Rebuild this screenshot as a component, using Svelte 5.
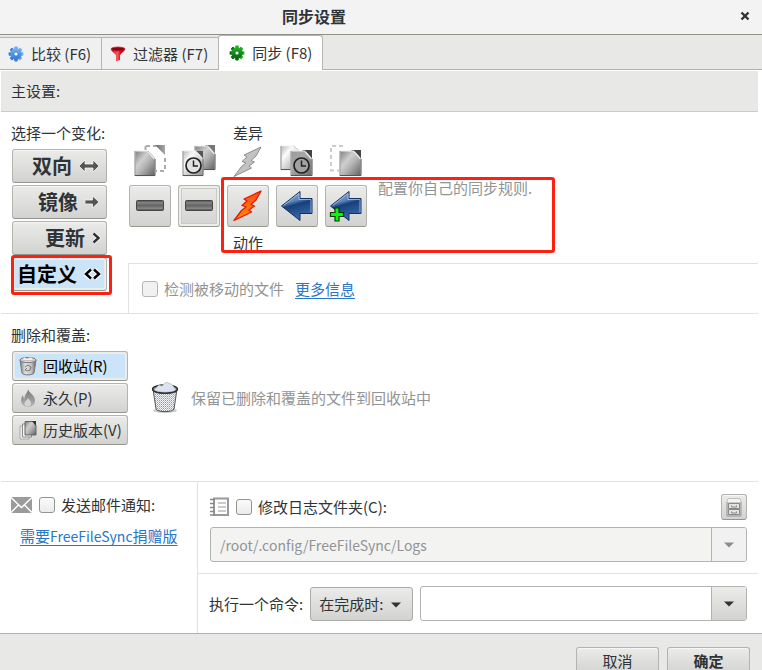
<script>
  const tabs = [
    { label: '比较 (F6)', icon: 'gear-blue' },
    { label: '过滤器 (F7)', icon: 'funnel' },
    { label: '同步 (F8)', icon: 'gear-green' }
  ];
  let activeTab = $state(2);

  const variants = [
    { label: '双向', icon: 'both', width: 22 },
    { label: '镜像', icon: 'right', width: 16 },
    { label: '更新', icon: 'chevron', width: 9 },
    { label: '自定义', icon: 'custom', width: 17 }
  ];
  let variant = $state(3);

  const differences = ['left-only', 'left-newer', 'conflict', 'right-newer', 'right-only'];
  const actions = [
    { name: '不同步左侧独有', icon: 'none' },
    { name: '不同步左侧较新', icon: 'none' },
    { name: '冲突', icon: 'bolt' },
    { name: '更新左侧', icon: 'arrow' },
    { name: '复制到左侧', icon: 'arrow-plus' }
  ];
  const bolt = 'M30 2L13 10l3 2-5 4.500 4 1.500-4.500 3.500L3 31.500 20.500 23l-2.500-2 5.500-4-3.500-1.500 5-4.500z';

  const deletion = [
    { label: '回收站(R)', icon: 'bin' },
    { label: '永久(P)', icon: 'flame' },
    { label: '历史版本(V)', icon: 'versions' }
  ];
  let deleteMode = $state(0);
  let logPath = $state('/root/.config/FreeFileSync/Logs');
  let command = $state('');
</script>

{#snippet gear(color)}
  <svg width="16" height="16" viewBox="0 0 16 16" aria-hidden="true">
    <g fill="url(#gear-{color})">
      {#each [0, 45, 90, 135] as angle}
        <rect x="6.200" y="0.600" width="3.600" height="14.800" rx="0.800" transform="rotate({angle} 8 8)" />
      {/each}
      <circle cx="8" cy="8" r="5.700" />
    </g>
    <circle cx="8" cy="8" r="2.100" fill="#fff" stroke={color === 'blue' ? '#3474c8' : '#075c0c'} stroke-width="0.800" />
  </svg>
{/snippet}

{#snippet sheet(x, y, w, h, fill)}
  <path d="M{x} {y}h{w - 7}l7 8v{h - 8}h-{w}z" fill={fill} stroke="#eee" stroke-width="1" />
  <path d="M{x} {y + h}V{y}" stroke="#8a8a8a" fill="none" />
  <path d="M{x} {y + h - 0.5}h{w}V{y + 8}l-7-8" fill="none" stroke="#555" stroke-width="1" />
  <path d="M{x + w - 7} {y + 0.5}l6.500 7.500" stroke="#eee" stroke-width="1.200" />
{/snippet}

{#snippet clock(x, y, face)}
  <circle cx={x} cy={y} r="7.500" fill={face} stroke="#222" stroke-width="1.700" />
  <path d="M{x} {y - 5}v5.500h4.500" fill="none" stroke="#222" stroke-width="1.500" />
{/snippet}

{#snippet caret(color)}
  <svg width="10" height="6" viewBox="0 0 10 6" aria-hidden="true"><path d="M0 .5h10L5 5.500z" fill={color} /></svg>
{/snippet}

<svg class="defs" width="0" height="0" aria-hidden="true">
  <defs>
    <linearGradient id="gear-blue" x2="0" y2="1"><stop stop-color="#72b2f7" /><stop offset="1" stop-color="#3579d2" /></linearGradient>
    <linearGradient id="gear-green" x2="0" y2="1"><stop stop-color="#21b52a" /><stop offset="1" stop-color="#06640d" /></linearGradient>
    <linearGradient id="red" x2="1"><stop stop-color="#a00010" /><stop offset=".45" stop-color="#ff5a60" /><stop offset=".7" stop-color="#d90012" /><stop offset="1" stop-color="#8d000c" /></linearGradient>
    <linearGradient id="paper" x2="1" y2="1"><stop stop-color="#7c7c7c" /><stop offset=".35" stop-color="#cfcfcf" /><stop offset=".55" stop-color="#b4b4b4" /><stop offset="1" stop-color="#5e5e5e" /></linearGradient>
    <linearGradient id="paper-light" x2="1" y2="1"><stop stop-color="#b5b5b5" /><stop offset=".3" stop-color="#fbfbfb" /><stop offset="1" stop-color="#8d8d8d" /></linearGradient>
    <linearGradient id="paper-dark" x2="1" y2="1"><stop stop-color="#999" /><stop offset=".4" stop-color="#a8a8a8" /><stop offset="1" stop-color="#6b6b6b" /></linearGradient>
    <linearGradient id="fold" x2="1" y2="0"><stop stop-color="#666" /><stop offset="1" stop-color="#aaa" /></linearGradient>
    <linearGradient id="bolt-fill" x2="0" y2="1"><stop stop-color="#ff4a14" /><stop offset="1" stop-color="#ff8d06" /></linearGradient>
    <linearGradient id="arrow-fill" x2=".3" y2="1"><stop stop-color="#9dbbe0" /><stop offset=".42" stop-color="#5a82b8" /><stop offset=".54" stop-color="#173f7b" /><stop offset="1" stop-color="#3767a8" /></linearGradient>
    <linearGradient id="bar" x2="0" y2="1"><stop stop-color="#484848" /><stop offset=".2" stop-color="#828282" /><stop offset=".5" stop-color="#666" /><stop offset=".8" stop-color="#858585" /><stop offset="1" stop-color="#444" /></linearGradient>
    <linearGradient id="flame" x2="0" y2="1"><stop stop-color="#777" /><stop offset="1" stop-color="#b5b5b5" /></linearGradient>
    <linearGradient id="can" x2="1"><stop stop-color="#7d7d7d" /><stop offset=".35" stop-color="#e4e4e4" /><stop offset=".7" stop-color="#c4c4c4" /><stop offset="1" stop-color="#666" /></linearGradient>
    <pattern id="mesh" width="2" height="2" patternUnits="userSpaceOnUse"><rect width="2" height="2" fill="#f2f3f6" /><rect width="1" height="1" fill="#9499a2" /><rect x="1" y="1" width="1" height="1" fill="#bfc2c9" /></pattern>
  </defs>
</svg>

<div class="dialog">
  <header class="titlebar">
    <h1>同步设置</h1>
    <button class="close" aria-label="关闭">
      <svg width="10" height="10" viewBox="0 0 10 10" aria-hidden="true"><path d="M1.500 1.500l7 7M8.500 1.500l-7 7" stroke="#2e3436" stroke-width="2.400" /></svg>
    </button>
  </header>

  <div class="tabs" role="tablist">
    {#each tabs as tab, i}
      <button class="tab" class:active={activeTab === i} role="tab" aria-selected={activeTab === i} onclick={() => (activeTab = i)}>
        {#if tab.icon === 'gear-blue'}
          {@render gear('blue')}
        {:else if tab.icon === 'gear-green'}
          {@render gear('green')}
        {:else}
          <svg width="16" height="16" viewBox="0 0 16 16" aria-hidden="true">
            <path d="M1 3.200C1 5 6 8 6 9.500V15.200l4-1.200V9.500C10 8 15 5 15 3.200z" fill="url(#red)" />
            <ellipse cx="8" cy="3" rx="7" ry="2" fill="#8a0010" stroke="#e0202c" stroke-width="0.700" />
          </svg>
        {/if}
        <span>{tab.label}</span>
      </button>
    {/each}
  </div>

  <main>
    <h2 class="heading">主设置:</h2>

    <section class="sync">
      <div class="variants">
        <p>选择一个变化:</p>
        {#each variants as item, i}
          <div class="variant-slot">
            <button class="btn variant" class:selected={variant === i} onclick={() => (variant = i)}>
              <span>{item.label}</span>
              <svg width={item.width} height="14" viewBox="0 0 {item.width} 14" aria-hidden="true">
                {#if item.icon === 'both'}
                  <path d="M0 7l6-6v4h8V1l6 6-6 6V9H6v4z" fill="#555" stroke="#f6f6f6" stroke-width="0.800" />
                {:else if item.icon === 'right'}
                  <path d="M0 5h7.500V1l6.500 6-6.500 6V9H0z" fill="#555" stroke="#f6f6f6" stroke-width="0.800" />
                {:else if item.icon === 'chevron'}
                  <path d="M1.500 2.500l5 4.500-5 4.500" fill="none" stroke="#fff" stroke-width="4" />
                  <path d="M1.500 2.500l5 4.500-5 4.500" fill="none" stroke="#333" stroke-width="2.500" />
                {:else}
                  <path d="M7 2.500L2 7l5 4.500M10 2.500L15 7l-5 4.500" fill="none" stroke="#fff" stroke-width="5" />
                  <path d="M7 2.500L2 7l5 4.500M10 2.500L15 7l-5 4.500" fill="none" stroke="#000" stroke-width="2.500" />
                {/if}
              </svg>
            </button>
            {#if item.icon === 'custom'}<div class="mark mark-variant"></div>{/if}
          </div>
        {/each}
      </div>

      <div class="rules">
        <div class="rules-top">
          <div class="matrix">
            <span class="matrix-label">差异</span>
            {#each differences as diff}
              <svg width="34" height="32" viewBox="0 0 34 32" aria-hidden="true">
                {#if diff === 'left-only'}
                  <path d="M13 1h10M12.500 1v4M32 13v14M31 26h-8" fill="none" stroke="#aaa" stroke-width="2" stroke-dasharray="4 3" />
                  <path d="M22 0h10v10z" fill="url(#fold)" />
                  {@render sheet(2, 6, 20, 25, 'url(#paper)')}
                {:else if diff === 'left-newer'}
                  <path d="M23 0h10v10z" fill="#777" />
                  {@render sheet(13, 1, 20, 24, 'url(#paper)')}
                  <path d="M13 6h8v8z" fill="#555" />
                  {@render sheet(1, 6, 20, 25, 'url(#paper-light)')}
                  {@render clock(11.5, 20.5, '#e2e2e2')}
                {:else if diff === 'conflict'}
                  <path d={bolt} fill="#c2c2c2" stroke="#8d8d8d" />
                {:else if diff === 'right-newer'}
                  {@render sheet(1, 1, 20, 24, 'url(#paper-light)')}
                  <path d="M22 5h10v10z" fill="#444" />
                  {@render sheet(11, 6, 21, 25, 'url(#paper-dark)')}
                  {@render clock(21.5, 20.5, '#a2a2a2')}
                {:else}
                  <path d="M2 3v22M1 25.500h9M3 1h12" fill="none" stroke="#ccc" stroke-width="2" stroke-dasharray="4 3" />
                  <path d="M22 5h10v10z" fill="#444" />
                  {@render sheet(11, 6, 21, 25, 'url(#paper)')}
                {/if}
              </svg>
            {/each}
            {#each actions as action, i}
              <button class="btn action" class:focused={i === 1} aria-label={action.name}>
                <svg width="34" height="34" viewBox="0 0 34 34" aria-hidden="true">
                  {#if action.icon === 'none'}
                    <rect x="3.500" y="11.500" width="27" height="10" rx="1" fill="url(#bar)" stroke="#464646" />
                  {:else if action.icon === 'bolt'}
                    <path d={bolt} fill="url(#bolt-fill)" stroke="#e31808" stroke-width="1.300" stroke-linejoin="round" />
                  {:else}
                    <path d="M1.500 17L20 2.500V9.500h12v15H20v7z" fill="url(#arrow-fill)" stroke="#142f5c" stroke-linejoin="round" />
                    <path d="M3.500 16.500L19 4.500v6h12v13" fill="none" stroke="#a9c2e2" stroke-width="0.800" />
                    {#if action.icon === 'arrow-plus'}
                      <path d="M6 19h4v4.500h4.500v4H10V32H6v-4.500H1.500v-4H6z" fill="#0cf60c" stroke="#063b06" stroke-width="1.200" />
                    {/if}
                  {/if}
                </svg>
              </button>
            {/each}
            <span class="matrix-label">动作</span>
            <div class="mark mark-rules"></div>
          </div>
          <p class="hint">配置你自己的同步规则.</p>
        </div>
        <div class="moved">
          <label class="muted"><input type="checkbox" disabled />检测被移动的文件</label>
          <a href="#more">更多信息</a>
        </div>
      </div>
    </section>

    <section class="deletion">
      <p>删除和覆盖:</p>
      <div class="deletion-body">
        <div class="modes">
          {#each deletion as mode, i}
            <button class="btn mode" class:selected={deleteMode === i} onclick={() => (deleteMode = i)}>
              <svg width="20" height="20" viewBox="0 0 20 20" aria-hidden="true">
                {#if mode.icon === 'bin'}
                  <path d="M2 4l2 13c1 2.500 11 2.500 12 0l2-13z" fill="url(#can)" stroke="#777" />
                  <ellipse cx="10" cy="4" rx="8" ry="2.600" fill="#ddd" stroke="#777" />
                  <path d="M4 4.500l2-3.500 3 1.500 4-1.500 3 3.500z" fill="#eee" stroke="#aaa" stroke-width="0.600" />
                  <path d="M7 11l3-2 3 2-1 3-3 1-2-1 2-2" fill="none" stroke="#777" />
                {:else if mode.icon === 'flame'}
                  <path d="M10 1c1 4 7 6 7 11.500 0 4-3 6.500-7 6.500s-7-3-7-6.500C3 10 4 8 5 7c0 2 .5 3 1.500 3.500C6.500 6 10 5 10 1z" fill="url(#flame)" />
                  <path d="M10 10c1 2 3 3 3 5.500C13 17.500 11.500 18.500 9.500 18.500S6.500 17 6.500 15.500C6.500 13 9.500 12.500 10 10z" fill="#d4d4d4" />
                {:else}
                  <path d="M2 6h9v13H2z" fill="#eee" stroke="#aaa" />
                  <path d="M4.500 4h9v13h-9z" fill="#f6f6f6" stroke="#888" />
                  <path d="M7 1.500h8l3 4V15H7z" fill="url(#paper)" stroke="#666" />
                  <path d="M14 1h4v5z" fill="#333" />
                {/if}
              </svg>
              <span>{mode.label}</span>
            </button>
          {/each}
        </div>
        <svg width="28" height="32" viewBox="0 0 28 32" aria-hidden="true">
          <ellipse cx="14" cy="28.500" rx="12" ry="2.500" fill="#ccc" />
          <path d="M2 7l3 20c1.500 3.500 16.500 3.500 18 0L26 7z" fill="url(#mesh)" stroke="#555" />
          <ellipse cx="14" cy="7" rx="12.500" ry="4" fill="#888d96" stroke="#222" stroke-width="1.300" />
          <path d="M3 8l5-5 3 1 4-4 5 2 2 2 3 4c-5 3-17 3-22 0z" fill="#dbe3f0" stroke="#a4adba" stroke-width="0.600" />
          <path d="M2 8c2 4.500 22 4.500 24 0" fill="none" stroke="#333" stroke-width="1.400" />
        </svg>
        <p class="hint">保留已删除和覆盖的文件到回收站中</p>
      </div>
    </section>

    <section class="extras">
      <div class="mail">
        <div class="line">
          <svg width="22" height="16" viewBox="0 0 22 16" aria-hidden="true">
            <rect width="21" height="16" fill="#9b9b9b" />
            <path d="M0 .5l10.500 10L21 .5M0 15.500l8-8M21 15.500l-8-8" fill="none" stroke="#fff" stroke-width="1.400" />
          </svg>
          <label><input type="checkbox" />发送邮件通知:</label>
        </div>
        <a href="#donate">需要<span class="latin">FreeFileSync</span>捐赠版</a>
      </div>

      <div class="right">
        <div class="log">
          <div class="line">
            <svg width="20" height="20" viewBox="0 0 20 20" aria-hidden="true">
              <rect x="4" y="1.500" width="14" height="16.500" fill="#fff" stroke="#999" stroke-width="2" />
              <path d="M8 6h8M8 10h8M8 14h8" stroke="#bbb" stroke-width="1.400" />
              <path d="M0 2.500h5M0 6.500h5M0 10.500h5M0 14.500h5M0 18h5" stroke="#888" stroke-width="1.400" />
            </svg>
            <label><input type="checkbox" />修改日志文件夹(C):</label>
            <button class="btn browse" aria-label="浏览">
              <svg width="18" height="20" viewBox="0 0 18 20" aria-hidden="true">
                <path d="M3 2h12l1 3v14H2V5z" fill="#ccc" stroke="#999" />
                <path d="M3 2h12l1 3H2z" fill="#f3f3f3" />
                <path d="M3.500 6.500h11v5h-11zM3.500 12.500h11v5h-11z" fill="#e4e4e4" stroke="#888" />
                <path d="M6.500 8.500v1.500h5V8.500M6.500 14.500V16h5v-1.500" fill="none" stroke="#888" />
              </svg>
            </button>
          </div>
          <div class="combo disabled">
            <input type="text" aria-label="日志文件夹" bind:value={logPath} disabled />
            <button aria-label="日志文件夹历史" disabled>{@render caret('#8b8e8f')}</button>
          </div>
        </div>
        <div class="command">
          <label for="when">执行一个命令:</label>
          <div class="select">
            <select id="when"><option>在完成时:</option></select>
            {@render caret('#2e3436')}
          </div>
          <div class="combo">
            <input type="text" aria-label="命令" bind:value={command} />
            <button aria-label="命令历史">{@render caret('#2e3436')}</button>
          </div>
        </div>
      </div>
    </section>
  </main>

  <footer>
    <button class="btn">取消</button>
    <button class="btn ok">确定</button>
  </footer>
</div>

<style>
  :global(body) {
    margin: 0;
  }
  .defs {
    position: absolute;
  }
  .dialog {
    height: 100vh;
    display: flex;
    flex-direction: column;
    overflow: hidden;
    background: #e8e8e7;
    color: #2e3436;
    font: 15px/20px 'Noto Sans CJK SC', sans-serif;
  }
  .dialog * {
    box-sizing: border-box;
  }
  h1, h2, p {
    margin: 0;
    font-size: 15px;
    font-weight: 400;
  }
  svg {
    display: block;
    flex: none;
  }
  button, input, select {
    font: inherit;
    color: inherit;
    margin: 0;
    padding: 0;
  }
  a {
    color: #2a76c6;
    text-decoration: underline;
    text-underline-offset: 3px;
  }
  .latin {
    font-size: 14px;
  }

  .titlebar {
    flex: none;
    height: 35px;
    display: flex;
    align-items: center;
    padding: 0 12px 2px 37%;
    background: #f3f3f3;
    border-bottom: 1px solid #8f9184;
  }
  h1 {
    flex: 1;
    font-size: 16px;
    font-weight: 700;
  }
  .close {
    border: 0;
    background: none;
  }

  .tabs {
    flex: none;
    height: 35px;
    display: flex;
    align-items: flex-end;
    border-bottom: 1px solid #b0b2ae;
  }
  .tab {
    height: 32px;
    display: flex;
    align-items: center;
    gap: 7px;
    padding: 0 10px 0 8px;
    border: 1px solid #b4b6b2;
    border-width: 1px 1px 0 0;
    background: #f0f0f0;
  }
  .tab.active {
    height: 35px;
    margin: 0 0 -1px -1px;
    padding: 0 10px;
    border-left-width: 1px;
    border-radius: 3px 3px 0 0;
    background: #fff;
  }

  main {
    flex: none;
    padding: 1px 4px 0 1px;
    background: #fff;
    border-bottom: 1px solid #b0b2ae;
  }
  .heading {
    height: 41px;
    padding: 10px;
    background: #e8e8e7;
    border-bottom: 1px solid #ccc;
  }

  .btn {
    border: 1px solid #b2b4af;
    border-bottom-color: #94968d;
    border-radius: 3px;
    background: linear-gradient(#ebebea, #d2d2d0);
    box-shadow: inset 0 1px #f6f6f6;
  }
  .btn.selected {
    color: #000;
    background: #cce4f7;
    box-shadow: inset 0 0 0 2px #ececeb;
  }
  .hint, .muted {
    color: #919495;
  }
  .mark {
    position: absolute;
    border: 3px solid #ff2012;
    border-radius: 3px;
    pointer-events: none;
  }

  .sync {
    display: flex;
    border-bottom: 1px solid #e1e1e1;
  }
  .variants {
    width: 127px;
    padding: 11px 21px 0 11px;
    display: flex;
    flex-direction: column;
    gap: 2px;
  }
  .variants p {
    margin: 0 0 4px -1px;
    white-space: nowrap;
  }
  .variant-slot {
    position: relative;
  }
  .variant {
    width: 100%;
    height: 34px;
    display: flex;
    align-items: center;
    justify-content: flex-end;
    gap: 7px;
    padding: 0 5px 0 0;
    font-size: 20px;
    font-weight: 700;
    white-space: nowrap;
  }
  .mark-variant {
    inset: -2px -5px -4px -1px;
  }
  .rules {
    flex: 1;
  }
  .rules-top {
    height: 151px;
    display: flex;
    gap: 11px;
    padding: 11px 0 0 1px;
  }
  .matrix {
    position: relative;
    display: grid;
    grid-template-columns: repeat(5, 42px);
    grid-template-rows: 22px 40px 48px 20px;
    column-gap: 7px;
    justify-items: center;
  }
  .matrix-label {
    grid-column: 1 / -1;
  }
  .action {
    width: 42px;
    height: 42px;
    display: grid;
    place-items: center;
  }
  .action.focused {
    box-shadow: inset 0 0 0 2px #ededec, inset 0 0 0 3px #c9cac6;
  }
  .mark-rules {
    top: 54px;
    left: 92px;
    width: 334px;
    height: 76px;
  }
  .rules-top .hint {
    padding-top: 55px;
  }
  .moved {
    height: 50px;
    display: flex;
    align-items: center;
    gap: 11px;
    padding-left: 13px;
    border: 1px solid #e1e1e1;
    border-width: 1px 0 0 1px;
  }

  label {
    display: flex;
    align-items: center;
    gap: 6px;
    white-space: nowrap;
  }
  input[type='checkbox'] {
    appearance: none;
    width: 16px;
    height: 16px;
    border: 1px solid #92958c;
    border-radius: 3px;
    background: linear-gradient(#fafafa, #ececec);
  }
  input[type='checkbox']:disabled {
    border-color: #b5b7b3;
    background: #f1f1f1;
  }

  .deletion {
    height: 168px;
    padding: 11px 10px;
    border-bottom: 1px solid #e1e1e1;
  }
  .deletion-body {
    display: flex;
    align-items: center;
    padding: 6px 0 0 1px;
  }
  .modes {
    width: 116px;
    margin-right: 23px;
    display: flex;
    flex-direction: column;
    gap: 2px;
  }
  .mode {
    height: 30px;
    display: flex;
    align-items: center;
    gap: 5px;
    padding: 0 5px;
    white-space: nowrap;
  }
  .deletion-body .hint {
    margin-left: 12px;
  }

  .extras {
    display: flex;
    height: 151px;
  }
  .mail {
    width: 197px;
    padding: 13px 10px;
    border-right: 1px solid #e1e1e1;
    white-space: nowrap;
  }
  .line {
    display: flex;
    align-items: center;
    gap: 6px;
  }
  .mail a {
    display: block;
    margin: 11px 0 0 9px;
  }
  .right {
    flex: 1;
    min-width: 0;
  }
  .log {
    height: 92px;
    padding: 12px 11px 0 12px;
    border-bottom: 1px solid #e1e1e1;
  }
  .browse {
    width: 26px;
    height: 26px;
    display: grid;
    place-items: center;
    margin-left: auto;
  }
  .combo {
    flex: 1;
    min-width: 0;
    height: 35px;
    display: flex;
    overflow: hidden;
    border: 1px solid #b2b4af;
    border-radius: 3px;
    background: #fff;
  }
  .log .combo {
    margin-top: 7px;
  }
  .combo input {
    flex: 1;
    min-width: 0;
    padding: 0 9px;
    border: 0;
    background: none;
    font-size: 14px;
  }
  .combo button {
    width: 35px;
    display: grid;
    place-items: center;
    border: 0;
    border-left: 1px solid #b2b4af;
    background: linear-gradient(#ebebea, #d2d2d0);
  }
  .combo.disabled {
    color: #919495;
    background: #f3f3f2;
  }
  .combo.disabled button {
    background: #f1f1f1;
  }
  .command {
    display: flex;
    align-items: center;
    gap: 7px;
    padding: 12px 11px;
  }
  .select {
    position: relative;
  }
  .select select {
    appearance: none;
    display: block;
    width: 103px;
    height: 34px;
    padding-left: 8px;
    border: 1px solid #a9aba5;
    border-radius: 3px;
    background: linear-gradient(#ebebea, #d2d2d0);
  }
  .select svg {
    position: absolute;
    top: 15px;
    right: 12px;
    pointer-events: none;
  }

  footer {
    flex: none;
    display: flex;
    justify-content: flex-end;
    gap: 8px;
    padding: 13px 12px;
  }
  footer .btn {
    width: 83px;
    height: 28px;
    line-height: 18px;
  }
  .ok {
    font-weight: 700;
  }
</style>
